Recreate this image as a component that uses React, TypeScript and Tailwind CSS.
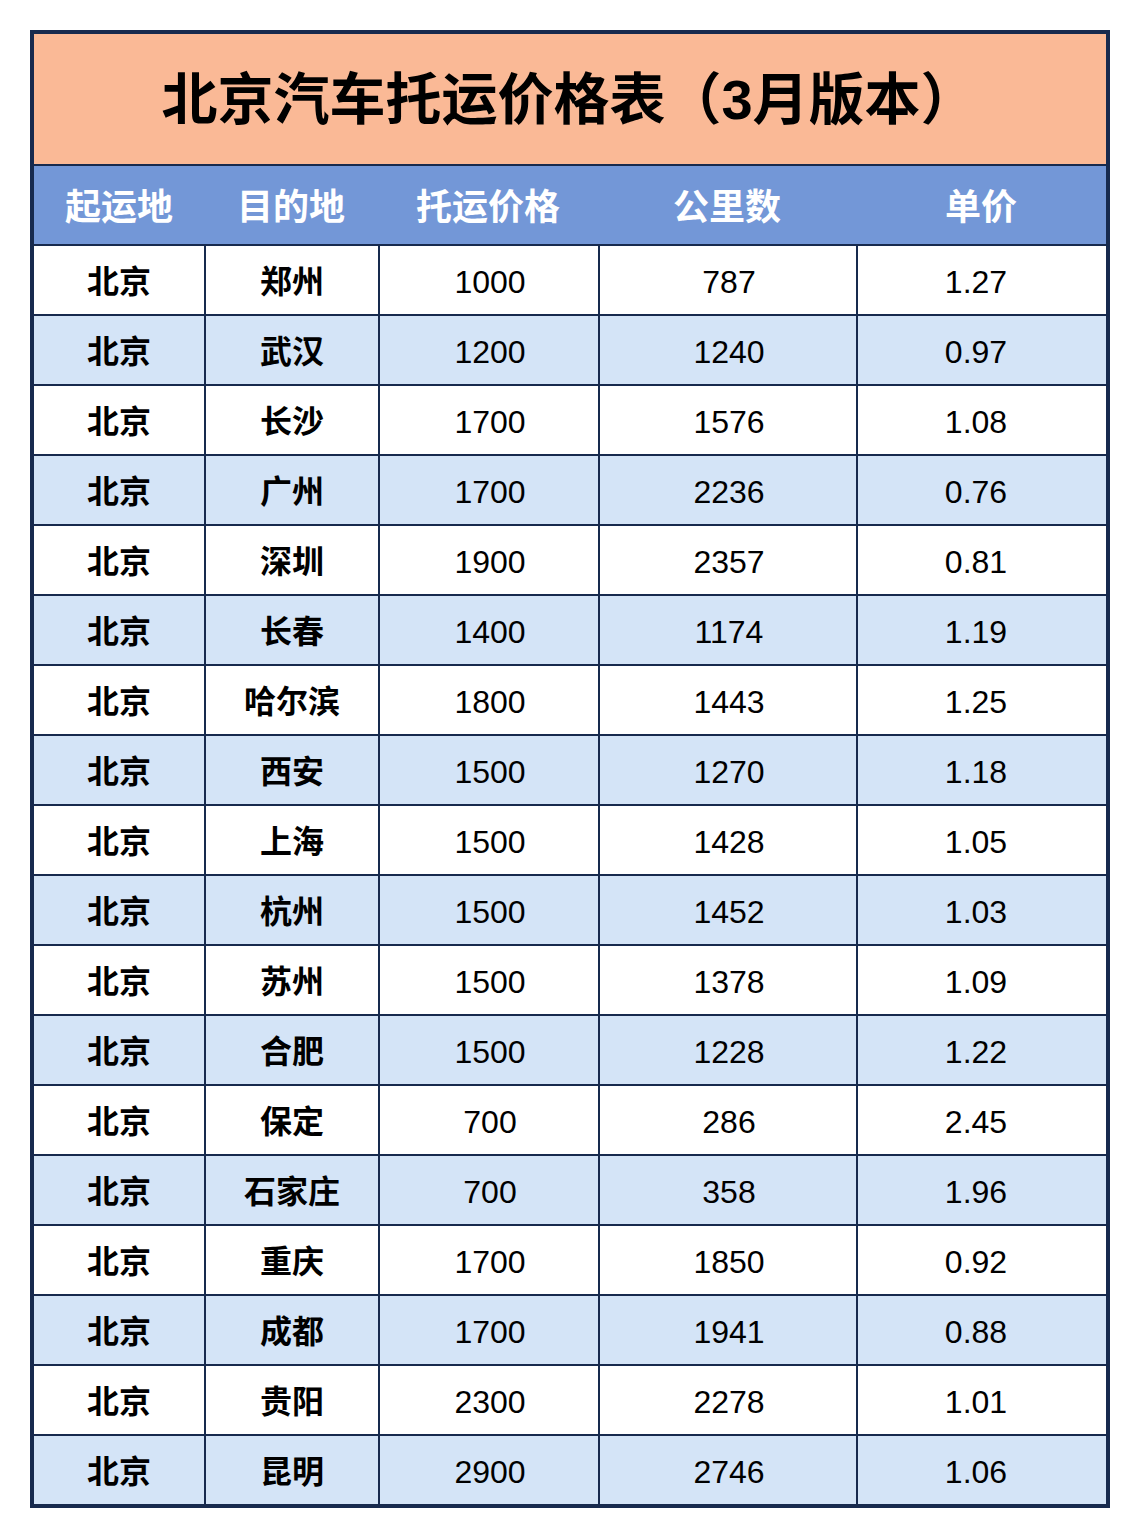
import React from "react";

const rows: [string, string, string, string, string][] = [
  ["北京", "郑州", "1000", "787", "1.27"],
  ["北京", "武汉", "1200", "1240", "0.97"],
  ["北京", "长沙", "1700", "1576", "1.08"],
  ["北京", "广州", "1700", "2236", "0.76"],
  ["北京", "深圳", "1900", "2357", "0.81"],
  ["北京", "长春", "1400", "1174", "1.19"],
  ["北京", "哈尔滨", "1800", "1443", "1.25"],
  ["北京", "西安", "1500", "1270", "1.18"],
  ["北京", "上海", "1500", "1428", "1.05"],
  ["北京", "杭州", "1500", "1452", "1.03"],
  ["北京", "苏州", "1500", "1378", "1.09"],
  ["北京", "合肥", "1500", "1228", "1.22"],
  ["北京", "保定", "700", "286", "2.45"],
  ["北京", "石家庄", "700", "358", "1.96"],
  ["北京", "重庆", "1700", "1850", "0.92"],
  ["北京", "成都", "1700", "1941", "0.88"],
  ["北京", "贵阳", "2300", "2278", "1.01"],
  ["北京", "昆明", "2900", "2746", "1.06"],
];

const headers = ["起运地", "目的地", "托运价格", "公里数", "单价"];

export default function App() {
  return (
    <div className="w-[1140px] h-[1538px] bg-white pt-[30px] pl-[30px] font-['Liberation_Sans','Noto_Sans_CJK_SC',sans-serif]">
      <div className="w-[1080px] border-[4px] border-[#172a4e] bg-white">
        <div className="h-[132px] bg-[#fab996] flex items-center justify-center pr-[2px] pt-[2px] border-b-2 border-[#172a4e]">
          <span className="text-[56px] font-bold text-black leading-none">北京汽车托运价格表（3月版本）</span>
        </div>
        <div className="grid grid-cols-[170px_174px_220px_258px_250px] h-[78px] bg-[#7397d7] text-white text-[36px] font-bold">
          {headers.map((h) => (
            <div key={h} className="flex items-center justify-center leading-none pt-[5px]">
              {h}
            </div>
          ))}
        </div>
        {rows.map((r, i) => (
          <div
            key={i}
            className={`grid grid-cols-[170px_174px_220px_258px_250px] h-[70px] border-t-2 border-[#172a4e] text-black text-[32px] ${
              i % 2 === 1 ? "bg-[#d4e4f7]" : "bg-white"
            }`}
          >
            <div className="flex items-center justify-center font-bold leading-none pt-[3px]">{r[0]}</div>
            <div className="flex items-center justify-center font-bold leading-none pt-[3px] border-l-2 border-[#172a4e]">{r[1]}</div>
            <div className="flex items-center justify-center leading-none pt-[3px] pl-[2px] border-l-2 border-[#172a4e]">{r[2]}</div>
            <div className="flex items-center justify-center leading-none pt-[3px] pl-[2px] border-l-2 border-[#172a4e]">{r[3]}</div>
            <div className="flex items-center justify-center leading-none pt-[3px] pr-[12px] border-l-2 border-[#172a4e]">{r[4]}</div>
          </div>
        ))}
      </div>
    </div>
  );
}
